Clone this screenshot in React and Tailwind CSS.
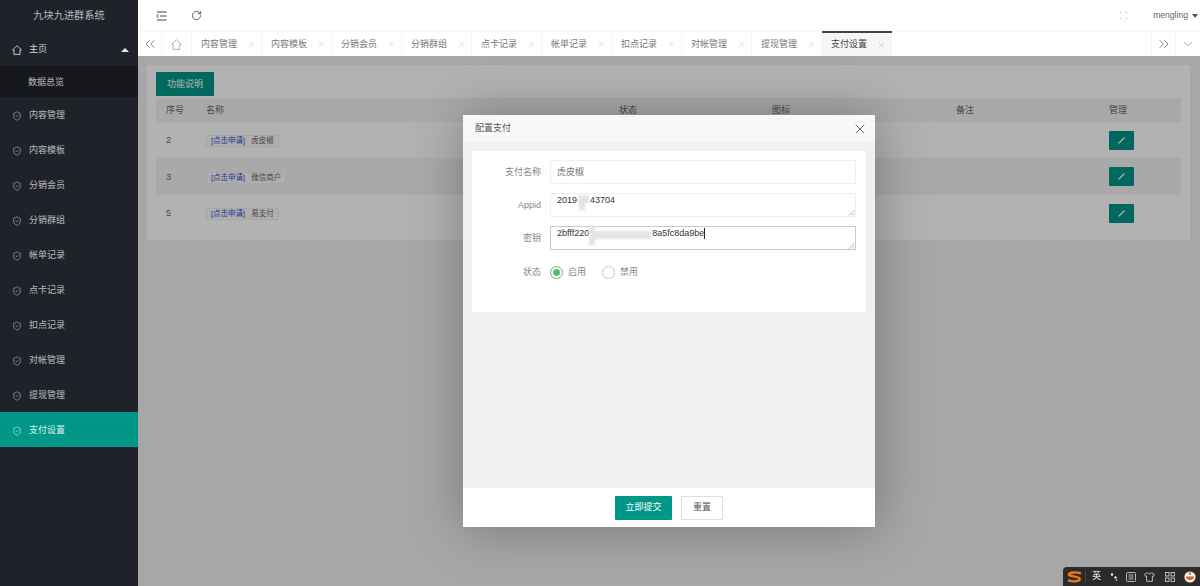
import React from "react";
import { ShieldCheck, RotateCw, X, ChevronsLeft, ChevronsRight, ChevronDown, Scan } from "lucide-react";

const font = { fontFamily: '"Liberation Sans","Noto Sans CJK SC",sans-serif' };
const menu = ["内容管理", "内容模板", "分销会员", "分销群组", "帐单记录", "点卡记录", "扣点记录", "对帐管理", "提现管理"];
const tabs = ["内容管理", "内容模板", "分销会员", "分销群组", "点卡记录", "帐单记录", "扣点记录", "对帐管理", "提现管理"];
const cols = "grid grid-cols-[40px_413px_153px_184px_153px_82px] items-center";
const rows = [
  { id: 2, name: "虎皮椒", h: "h-[36px]", shade: false },
  { id: 3, name: "微信商户", h: "h-[37px]", shade: true },
  { id: 5, name: "易支付", h: "h-[36px]", shade: false },
];

function HomeIcon({ size = 10, stroke = "currentColor", sw = 0.9 }) {
  return (
    <svg width={size} height={size} viewBox="0 0 10 10" fill="none" stroke={stroke} strokeWidth={sw} strokeLinejoin="round">
      <path d="M0.6 5 5 0.7 9.4 5H8v4.4H2V5Z" />
    </svg>
  );
}

function Sidebar() {
  return (
    <aside className="w-[138px] shrink-0 bg-[#20222a] text-[9px] text-[#ffffffb3]">
      <div className="h-[31px] flex items-center justify-center text-[10.2px] leading-none pt-[1px]">九块九进群系统</div>
      <div className="h-[35px] flex items-center pl-[12px] pr-[9px] pt-[2px] text-[#ffffffd0]">
        <span className="mr-[7px]"><HomeIcon size={10} /></span>
        <span>主页</span>
        <span className="ml-auto w-0 h-0 border-x-[4px] border-x-transparent border-b-[4px] border-b-[#e8e8e8]" />
      </div>
      <div className="h-[31px] flex items-center pl-[28px] pt-[2px] bg-[#16181d]">数据总览</div>
      {menu.map((m) => (
        <div key={m} className="h-[35px] flex items-center pl-[12px] pt-[2px]">
          <ShieldCheck size={10} strokeWidth={1.4} className="mr-[7px]" />
          <span>{m}</span>
        </div>
      ))}
      <div className="h-[35px] flex items-center pl-[12px] pt-[2px] bg-[#009688] text-[#ffffffe0]">
        <ShieldCheck size={10} strokeWidth={1.4} className="mr-[7px]" />
        <span>支付设置</span>
      </div>
    </aside>
  );
}

function TopBar() {
  return (
    <div className="h-[31px] bg-white flex items-center text-[#555]">
      <svg width="11" height="10" viewBox="0 0 11 10" className="ml-[18px]" fill="none" stroke="#444" strokeWidth="1">
        <path d="M1 1h9.5M4 5h6.5M1 9h9.5" />
        <path d="M2.5 3.4 0.8 5l1.7 1.6" />
      </svg>
      <RotateCw size={11} strokeWidth={1.8} className="ml-[24px] text-[#444]" />
      <Scan size={9} strokeWidth={1.1} className="ml-auto text-[#aaa]" />
      <span className="ml-[25px] text-[8.6px] text-[#666]">mengling</span>
      <span className="ml-[4px] mr-[2px] w-0 h-0 border-x-[3.5px] border-x-transparent border-t-[4px] border-t-[#555]" />
    </div>
  );
}

function TabBar() {
  return (
    <div className="h-[25px] bg-white flex text-[9px] text-[#777] border-t border-[#f8f8f8]">
      <div className="w-[24px] flex items-center justify-center border-r border-[#f4f4f4]">
        <ChevronsLeft size={16} strokeWidth={1} className="text-[#444]" />
      </div>
      <div className="w-[30px] flex items-center justify-center border-r border-[#f4f4f4]">
        <HomeIcon size={11} stroke="#999" sw={0.7} />
      </div>
      {tabs.map((t) => (
        <div key={t} className="w-[70px] flex items-center pl-[9px] pt-[1px] border-r border-[#f4f4f4]">
          <span>{t}</span>
          <X size={9} strokeWidth={1.2} className="ml-[10px] text-[#bbb]" />
        </div>
      ))}
      <div className="w-[70px] flex items-center pl-[9px] pt-[1px] bg-[#f6f6f6] border-t-2 border-[#444] -mt-px text-[#444]">
        <span>支付设置</span>
        <X size={9} strokeWidth={1.2} className="ml-[10px] text-[#aaa]" />
      </div>
      <div className="ml-auto w-[25px] flex items-center justify-center border-x border-[#f4f4f4]">
        <ChevronsRight size={16} strokeWidth={1} className="text-[#444]" />
      </div>
      <div className="w-[24px] flex items-center justify-center">
        <ChevronDown size={14} strokeWidth={1} className="text-[#666]" />
      </div>
    </div>
  );
}

function Panel() {
  return (
    <div className="flex-1 bg-[#f0f0f0] pt-[9px] pl-[9px] pr-[10px] relative">
      <div className="h-[175px] bg-white pt-[7px] pl-[9px]">
        <button className="block w-[58px] h-[24px] pt-[2px] bg-[#009688] text-white text-[9px] rounded-[1px] mb-[2px]">功能说明</button>
        <div className="w-[1025px] text-[9px] text-[#666]">
          <div className={`${cols} h-[24px] pt-[2px] bg-[#f2f2f2]`}>
            {["序号", "名称", "状态", "图标", "备注", "管理"].map((h) => (
              <div key={h} className="pl-[10px]">{h}</div>
            ))}
          </div>
          {rows.map((r) => (
            <div key={r.id} className={`${cols} ${r.h} ${r.shade ? "bg-[#f2f2f2]" : ""}`}>
              <div className="pl-[10px] pt-[2px]">{r.id}</div>
              <div className="pl-[10px] pt-[2px] flex">
                <span className="inline-flex items-center h-[12px] px-[4px] bg-[#fafafa] border border-[#eeeeee] text-[7.5px] leading-none">
                  <span className="text-[#2f4fd0] mr-[6px]">[点击申请]</span>
                  <span className="text-[#666]">{r.name}</span>
                </span>
              </div>
              <div />
              <div />
              <div />
              <div className="pl-[10px]">
                <button className="w-[25px] h-[19px] bg-[#009688] flex items-center justify-center rounded-[1px]">
                  <svg width="7" height="7" viewBox="0 0 7 7" stroke="#fff" strokeWidth="1.3" strokeLinecap="round"><path d="M1 6 6 1" /></svg>
                </button>
              </div>
            </div>
          ))}
        </div>
      </div>
      <div className="absolute inset-0 bg-black/30" />
    </div>
  );
}

function Field({ label, children, className }) {
  return (
    <div className={`flex ${className}`}>
      <label className="w-[69px] text-right text-[9px] text-[#888] self-center pt-[2px] shrink-0">{label}</label>
      <div className="ml-[9px] w-[306px]">{children}</div>
    </div>
  );
}

function Smudge({ className }) {
  return <span className={`absolute bg-[#e4e4e4] blur-[1px] ${className}`} />;
}

function Grip() {
  return (
    <svg width="7" height="7" viewBox="0 0 7 7" className="absolute right-0 bottom-0" stroke="#999" strokeWidth="0.7">
      <path d="M1 6.5 6.5 1M4 6.5 6.5 4" />
    </svg>
  );
}

function Modal() {
  return (
    <div className="absolute left-[463px] top-[115px] w-[412px] h-[412px] bg-white flex flex-col shadow-[1px_1px_50px_rgba(0,0,0,0.3)]">
      <div className="h-[27px] bg-[#f8f8f8] flex items-center pl-[12px] pr-[7px] text-[9px] text-[#555] shrink-0">
        <span>配置支付</span>
        <X size={16} strokeWidth={1.1} className="ml-auto text-[#333]" />
      </div>
      <div className="flex-1 bg-[#f0f0f0] pt-[9px] px-[9px]">
        <div className="h-[161px] bg-white pt-[9px] text-[9px]">
          <Field label="支付名称" className="h-[24px]">
            <div className="h-[24px] pt-[2px] border border-[#eeeeee] flex items-center pl-[6px] text-[#777]">虎皮椒</div>
          </Field>
          <Field label="Appid" className="h-[24px] mt-[9px]">
            <div className="relative h-[24px] border border-[#eeeeee] pl-[6px] text-[#333]">
              2019<span className="ml-[13px]">43704</span>
              <Smudge className="left-[27px] top-[1px] w-[11px] h-[8px]" />
              <Smudge className="left-[28px] top-[6px] w-[6px] h-[10px]" />
              <Grip />
            </div>
          </Field>
          <Field label="密钥" className="h-[24px] mt-[9px]">
            <div className="relative h-[24px] border border-[#c9c9c9] pl-[6px] text-[#333]">
              <span className="whitespace-nowrap">2bfff220<span className="ml-[63px]">8a5fc8da9be</span></span>
              <span className="inline-block align-top w-px h-[11px] bg-[#222] mt-[1px]" />
              <Smudge className="left-[40px] top-[4px] w-[60px] h-[8px]" />
              <Smudge className="left-[38px] top-[-2px] w-[6px] h-[20px]" />
              <Grip />
            </div>
          </Field>
          <Field label="状态" className="h-[24px] mt-[10px]">
            <div className="h-[24px] flex items-center text-[#888]">
              <span className="w-[13px] h-[13px] rounded-full border border-[#5fb878] flex items-center justify-center">
                <span className="w-[7px] h-[7px] rounded-full bg-[#5fb878]" />
              </span>
              <span className="ml-[5px] pt-[2px]">启用</span>
              <span className="ml-[16px] w-[13px] h-[13px] rounded-full border border-[#c9c9c9]" />
              <span className="ml-[5px] pt-[2px]">禁用</span>
            </div>
          </Field>
        </div>
      </div>
      <div className="h-[40px] border-t border-[#eeeeee] flex items-center justify-center gap-[9px] shrink-0">
        <button className="w-[57px] h-[24px] pt-[1px] bg-[#009688] text-white text-[9px] rounded-[1px]">立即提交</button>
        <button className="w-[42px] h-[24px] pt-[1px] bg-white border border-[#dddddd] text-[#555] text-[9px] rounded-[1px]">重置</button>
      </div>
    </div>
  );
}

function Ime() {
  return (
    <div className="absolute right-0 bottom-0 w-[137px] h-[19px] bg-[#2b2b2b] rounded-tl-[4px] flex items-center pl-[4px] text-white">
      <svg width="15" height="12" viewBox="0 0 15 12" fill="none" stroke="#f07a1a" strokeWidth="2.4" strokeLinecap="round">
        <path d="M13 2.2C9 0.9 3 1.2 2 3.4 1.2 5.5 13 5.2 12.8 8 12.5 10.4 6 11 2 9.6" />
      </svg>
      <span className="w-px h-[12px] bg-[#444] ml-[3px]" />
      <span className="ml-[6px] text-[9px] leading-none">英</span>
      <svg width="8" height="8" viewBox="0 0 8 8" fill="#eee" className="ml-[9px]">
        <circle cx="2" cy="1.5" r="1.2" /><circle cx="5.5" cy="4.5" r="1.2" /><circle cx="6.5" cy="7" r="0.8" />
      </svg>
      <svg width="10" height="10" viewBox="0 0 10 10" fill="none" stroke="#ddd" strokeWidth="0.8" className="ml-[8px]">
        <rect x="0.5" y="0.5" width="9" height="9" rx="1" /><path d="M2.5 3h5M2.5 5h5M2.5 7h5" />
      </svg>
      <svg width="11" height="10" viewBox="0 0 11 10" fill="none" stroke="#ddd" strokeWidth="0.8" className="ml-[8px]">
        <path d="M3.5 0.7 0.6 2.4l1 2 1-.4v5.3h5.8V4l1 .4 1-2L7.5 0.7C7 2.2 4 2.2 3.5 0.7Z" />
      </svg>
      <svg width="10" height="10" viewBox="0 0 10 10" fill="none" stroke="#ddd" strokeWidth="0.8" className="ml-[10px]">
        <rect x="0.5" y="0.5" width="3.5" height="3.5" /><rect x="6" y="0.5" width="3.5" height="3.5" /><rect x="0.5" y="6" width="3.5" height="3.5" /><rect x="6" y="6" width="3.5" height="3.5" />
      </svg>
      <svg width="12" height="12" viewBox="0 0 12 12" className="ml-[9px]">
        <circle cx="6" cy="6" r="5.6" fill="#f4f0e8" />
        <path d="M2 5.5h8c0 2-1.5 3.6-4 3.6S2 7.5 2 5.5Z" fill="#d9622b" />
        <circle cx="6" cy="2.5" r="1.2" fill="#d9622b" />
      </svg>
    </div>
  );
}

export default function App() {
  return (
    <div className="relative w-[1200px] h-[586px] overflow-hidden flex bg-white" style={font}>
      <Sidebar />
      <main className="flex-1 flex flex-col min-w-0">
        <TopBar />
        <TabBar />
        <Panel />
      </main>
      <Modal />
      <Ime />
    </div>
  );
}
